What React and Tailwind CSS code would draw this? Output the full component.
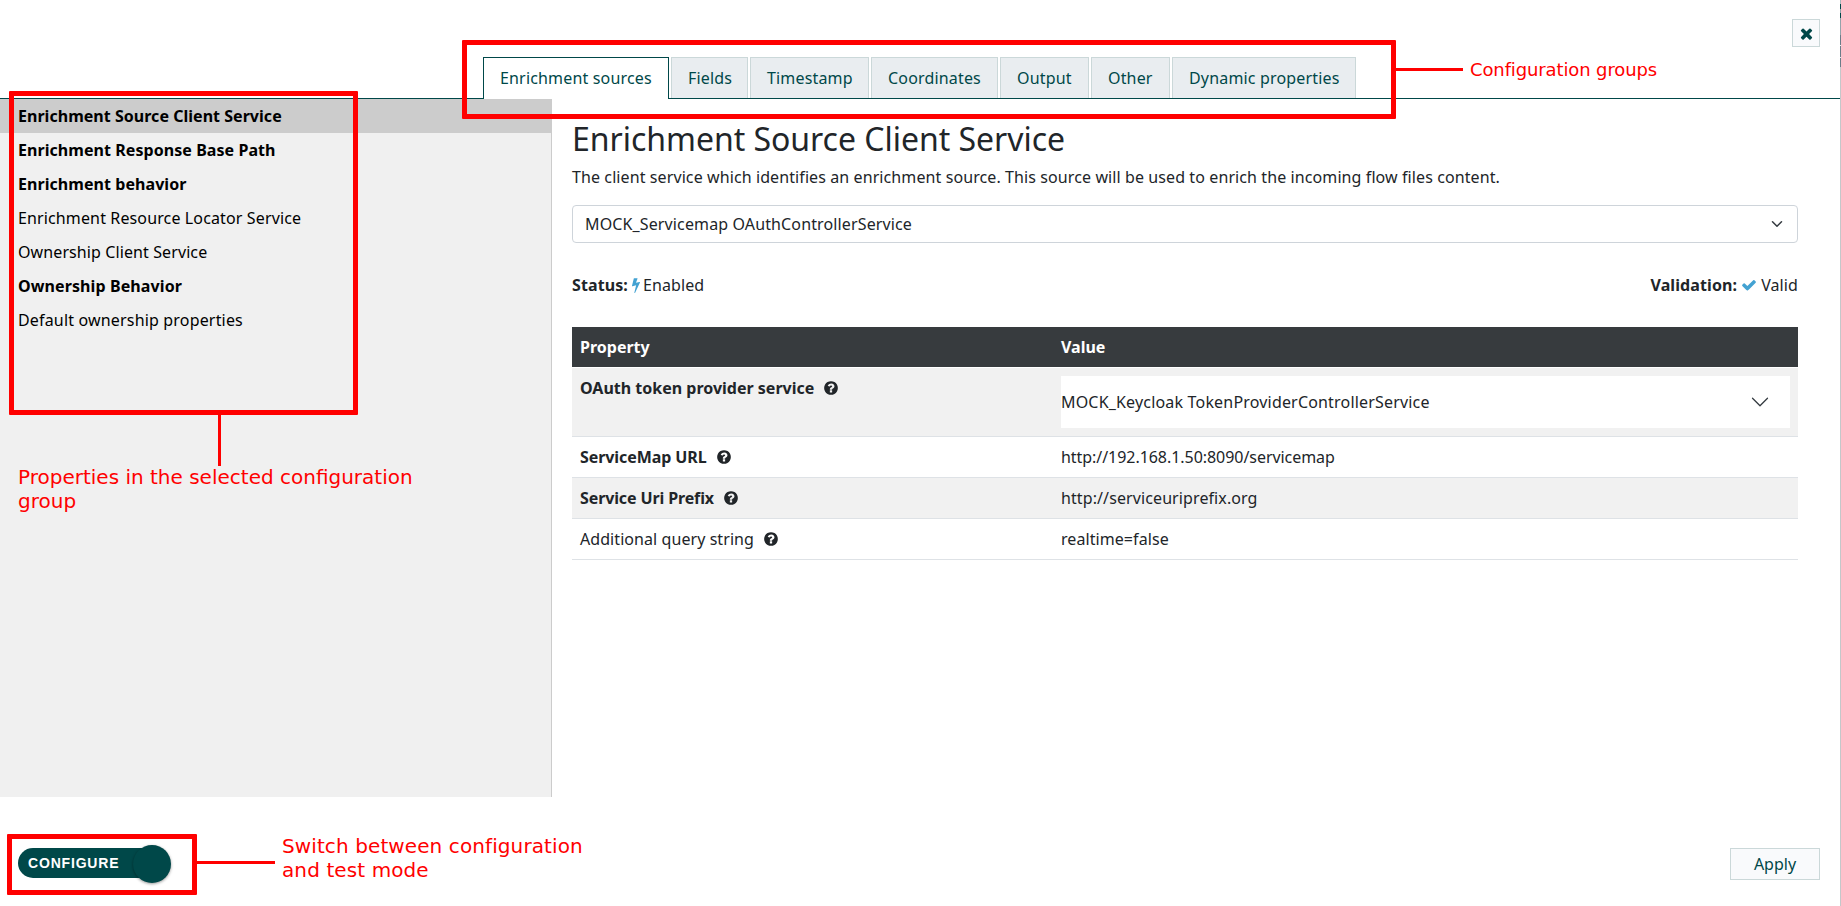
const tabs = [
  { label: "Enrichment sources", width: "w-[186px]" },
  { label: "Fields", width: "w-[77px]" },
  { label: "Timestamp", width: "w-[119px]" },
  { label: "Coordinates", width: "w-[127px]" },
  { label: "Output", width: "w-[89px]" },
  { label: "Other", width: "w-[79px]" },
  { label: "Dynamic properties", width: "w-[184px]" },
];

const properties = [
  { name: "Enrichment Source Client Service", required: true, tracking: "tracking-[0.03px]" },
  { name: "Enrichment Response Base Path", required: true, tracking: "tracking-[0.06px]" },
  { name: "Enrichment behavior", required: true, tracking: "tracking-[0.06px]" },
  { name: "Enrichment Resource Locator Service", tracking: "tracking-[0.13px]" },
  { name: "Ownership Client Service", tracking: "tracking-[0.1px]" },
  { name: "Ownership Behavior", required: true, tracking: "tracking-[0.1px]" },
  { name: "Default ownership properties", tracking: "tracking-[0.17px]" },
];

const rows = [
  {
    name: "OAuth token provider service",
    value: "MOCK_Keycloak TokenProviderControllerService",
    required: true,
    select: true,
    nameTracking: "",
    valueTracking: "tracking-[0.18px]",
  },
  {
    name: "ServiceMap URL",
    value: "http://192.168.1.50:8090/servicemap",
    required: true,
    nameTracking: "tracking-[-0.08px]",
    valueTracking: "tracking-[-0.05px]",
  },
  {
    name: "Service Uri Prefix",
    value: "http://serviceuriprefix.org",
    required: true,
    nameTracking: "tracking-[-0.12px]",
    valueTracking: "tracking-[0.1px]",
  },
  {
    name: "Additional query string",
    value: "realtime=false",
    nameTracking: "tracking-[0.07px]",
    valueTracking: "tracking-[0.07px]",
  },
];

const glyphs = {
  times:
    "M1490 1322q0 40-28 68l-136 136q-28 28-68 28t-68-28l-294-294-294 294q-28 28-68 28t-68-28l-136-136q-28-28-28-68t28-68l294-294-294-294q-28-28-28-68t28-68l136-136q28-28 68-28t68 28l294 294 294-294q28-28 68-28t68 28l136 136q28 28 28 68t-28 68l-294 294 294 294q28 28 28 68z",
  check:
    "M1671 566q0 40-28 68l-724 724-136 136q-28 28-68 28t-68-28l-136-136-362-362q-28-28-28-68t28-68l136-136q28-28 68-28t68 28l294 295 656-657q28-28 68-28t68 28l136 136q28 28 28 68z",
  question:
    "M1024 1376v-192q0-14-9-23t-23-9h-192q-14 0-23 9t-9 23v192q0 14 9 23t23 9h192q14 0 23-9t9-23zm256-672q0-88-55.5-163t-138.5-116-170-41q-243 0-371 213-15 24 8 42l132 100q7 6 19 6 16 0 25-12 53-68 86-92 34-24 86-24 48 0 85.5 26t37.5 59q0 38-20 61t-68 45q-63 28-115.5 86.5t-52.5 125.5v36q0 14 9 23t23 9h192q14 0 23-9t9-23q0-19 21.5-49.5t54.5-49.5q32-18 49-28.5t46-35 44.5-48 28-60.5 12.5-81zm384 192q0 209-103 385.5t-279.5 279.5-385.5 103-385.5-103-279.5-279.5-103-385.5 103-385.5 279.5-279.5 385.5-103 385.5 103 279.5 279.5 103 385.5z",
  bolt:
    "M1333 566q18 20 7 44l-540 1157q-13 25-42 25-4 0-14-2-17-5-25.5-19t-4.5-30l197-808-406 101q-4 1-12 1-18 0-31-11-18-15-13-39l201-825q4-14 16-23t28-9h328q19 0 32 12.5t13 29.5q0 8-5 18l-171 463 396-98q8-2 12-2 19 0 34 15z",
};

function Glyph({ name, className, viewBox = "0 0 1792 1792" }) {
  return (
    <svg viewBox={viewBox} fill="currentColor" className={className}>
      <path d={glyphs[name]} />
    </svg>
  );
}

function Chevron({ className, width }) {
  return (
    <svg viewBox="0 0 16 16" fill="none" stroke="#343a40" strokeWidth={width} strokeLinecap="round" strokeLinejoin="round" className={className}>
      <path d="M2 5l6 6 6-6" />
    </svg>
  );
}

function Header() {
  return (
    <header className="flex h-[99px] shrink-0 items-end border-b border-[#004849] pl-[483px]">
      <nav className="-mb-px flex gap-[2px] tracking-[0.17px] whitespace-nowrap">
        {tabs.map((tab, i) => (
          <button
            key={tab.label}
            className={`border border-b-0 pl-4 text-left text-[#004849] ${tab.width} ${
              i === 0 ? "h-[42px] border-[#004849] bg-white pb-px" : "mb-px h-[41px] border-[#cbd8d9] bg-[#e9edf0]"
            }`}
          >
            {tab.label}
          </button>
        ))}
      </nav>
      <button className="mr-5 mb-[51px] ml-auto flex size-7 items-center justify-center border border-[#cbd8d9] bg-[#f9fafc] text-[#004849]">
        <Glyph name="times" className="size-[17px]" />
      </button>
    </header>
  );
}

function Sidebar() {
  return (
    <aside className="w-[552px] shrink-0 border-r border-[#ccc] bg-[#f0f0f0] text-black">
      <ul>
        {properties.map((p, i) => (
          <li
            key={p.name}
            className={`h-[34px] pl-[18px] leading-[34px] ${p.tracking} ${i === 0 ? "bg-[#ccc]" : ""} ${p.required ? "font-bold" : ""}`}
          >
            {p.name}
          </li>
        ))}
      </ul>
    </aside>
  );
}

function Details() {
  return (
    <main className="flex-1 pr-[42px] pl-5">
      <h2 className="pt-[21px] text-[32px] leading-[38px] tracking-[-0.03px]">Enrichment Source Client Service</h2>
      <p className="mt-[7px] leading-6 tracking-[0.097px]">
        The client service which identifies an enrichment source. This source will be used to enrich the incoming flow files content.
      </p>
      <div className="mt-4 flex h-[38px] items-center justify-between rounded border border-[#ced4da] px-3 tracking-[0.13px]">
        <span>MOCK_Servicemap OAuthControllerService</span>
        <Chevron width={2} className="h-3 w-4" />
      </div>
      <div className="mt-[30px] flex justify-between leading-6 tracking-[0.1px]">
        <div className="flex items-center">
          <b>Status:</b>
          <Glyph name="bolt" viewBox="448 0 896 1792" className="mr-[3px] ml-1 h-4 w-2 text-[#43a2d2]" />
          Enabled
        </div>
        <div className="flex items-center">
          <b>Validation:</b>
          <Glyph name="check" className="mr-1 ml-1 size-4 text-[#43a2d2]" />
          Valid
        </div>
      </div>
      <table className="mt-[30px] w-full table-fixed border-separate border-spacing-0 text-left">
        <thead>
          <tr className="text-white">
            <th className="w-[481px] border-b border-white bg-[#373b3e] bg-clip-padding p-2 font-bold">Property</th>
            <th className="border-b border-white bg-[#373b3e] bg-clip-padding p-2 font-bold">Value</th>
          </tr>
        </thead>
        <tbody>
          {rows.map((row, i) => (
            <tr key={row.name} className={i % 2 === 0 && i < 4 ? "bg-[#f1f1f1]" : ""}>
              <td className={`border-b border-[#dee2e6] p-2 align-top ${row.nameTracking} ${row.required ? "font-bold" : ""}`}>
                <div className="flex items-center gap-[9px]">
                  {row.name}
                  <Glyph name="question" className="size-4" />
                </div>
              </td>
              <td className={`border-b border-[#dee2e6] p-2 ${row.valueTracking}`}>
                {row.select ? (
                  <div className="flex h-[52px] items-center justify-between bg-white pr-5">
                    {row.value}
                    <Chevron width={1} className="size-5" />
                  </div>
                ) : (
                  row.value
                )}
              </td>
            </tr>
          ))}
        </tbody>
      </table>
    </main>
  );
}

function Footer() {
  return (
    <footer className="flex flex-1 items-start justify-between pt-[51px] pr-5 pl-[18px]">
      <div className="relative flex h-[30px] w-[148px] items-center rounded-full bg-[#004849] pl-[10px] font-['Liberation_Sans',sans-serif] text-sm font-bold tracking-[0.82px] text-white">
        CONFIGURE
        <span className="absolute -top-[3px] left-[115px] size-[38px] rounded-full bg-[#004849] shadow-[0_1px_3px_rgba(0,0,0,0.4)]" />
      </div>
      <button className="h-8 w-[90px] border border-[#cbd8d9] bg-[#f9fafc] text-[#004849]">Apply</button>
    </footer>
  );
}

/* Sliver of the page that shows beside the dialog's right edge. */
function PageEdge() {
  return (
    <div className="flex w-px shrink-0 flex-col bg-[#c3c8ca]">
      <div className="h-1 bg-[#a9b8bb]" />
      <div className="h-[5px] bg-[#004849]" />
      <div className="h-1 bg-[#8fa3a8]" />
      <div className="h-[5px] bg-[#004849]" />
      <div className="h-[17px] bg-[#93a3aa]" />
      <div className="h-[10px] bg-[#6b7d89]" />
      <div className="h-px bg-[#e8ebec]" />
      <div className="h-[11px] bg-[#6b7d89]" />
      <div className="h-px bg-[#e8ebec]" />
      <div className="h-[9px] bg-[#6b7d89]" />
    </div>
  );
}

function Annotations() {
  return (
    <div className="pointer-events-none absolute inset-0 font-['DejaVu_Sans',sans-serif] text-[#f00]">
      <div className="absolute top-[40px] left-[462px] h-[79px] w-[934px] rounded-[1px] border-5 border-[#f00]" />
      <div className="absolute top-[68px] left-[1396px] h-[3px] w-[67px] bg-[#f00]" />
      <div className="absolute top-[58px] left-[1470px] text-[18px] leading-6 tracking-[-0.12px] whitespace-nowrap">Configuration groups</div>

      <div className="absolute top-[91px] left-[9px] h-[324px] w-[349px] rounded-[1px] border-5 border-[#f00]" />
      <div className="absolute top-[415px] left-[218px] h-[51px] w-[3px] bg-[#f00]" />
      <div className="absolute top-[465px] left-[18px] text-[20px] leading-6 whitespace-nowrap">
        Properties in the selected configuration
        <br />
        group
      </div>

      <div className="absolute top-[834px] left-[7px] h-[61px] w-[190px] rounded-[1px] border-5 border-[#f00]" />
      <div className="absolute top-[861px] left-[197px] h-[3px] w-[78px] bg-[#f00]" />
      <div className="absolute top-[834px] left-[282px] text-[20px] leading-6 tracking-[0.1px] whitespace-nowrap">
        Switch between configuration
        <br />
        and test mode
      </div>
    </div>
  );
}

export default function App() {
  return (
    <div className="relative flex h-[906px] w-[1841px] overflow-hidden bg-white font-['Noto_Sans',sans-serif] text-base text-[#212529]">
      <div className="flex min-w-0 flex-1 flex-col">
        <Header />
        <div className="flex h-[698px] shrink-0">
          <Sidebar />
          <Details />
        </div>
        <Footer />
      </div>
      <PageEdge />
      <Annotations />
    </div>
  );
}
